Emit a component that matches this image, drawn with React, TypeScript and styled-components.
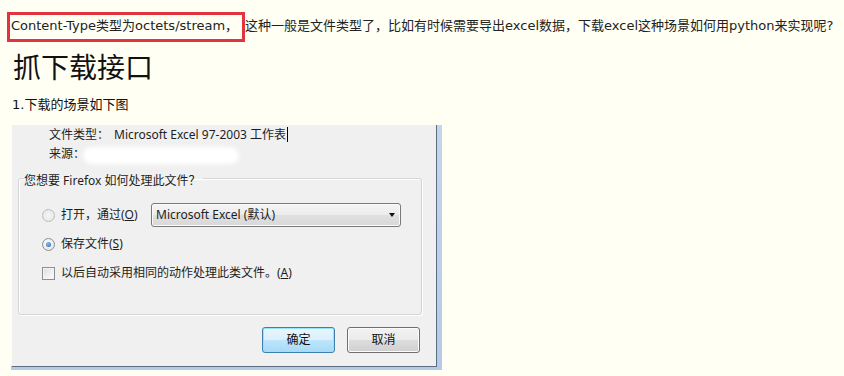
import React from "react";
import styled, { createGlobalStyle } from "styled-components";

const GlobalStyle = createGlobalStyle`
  html, body { margin: 0; padding: 0; background: #fffff4; }
  body { font-family: "DejaVu Sans", "Noto Sans CJK SC", sans-serif; color: #222; }
`;

const Page = styled.div`
  padding-top: 12px;
  min-height: 376px;
  box-sizing: border-box;
  background: #fffff4;
`;

const Intro = styled.p`
  margin: 0 0 0 7px;
  display: flex;
  align-items: baseline;
  font-size: 13px;
  line-height: 16px;
  white-space: nowrap;
  color: #222;
  text-spacing-trim: space-all;
`;

const Highlight = styled.span`
  border: 3px solid #e2343f;
  padding: 3px 4px 5px 1px;
`;

const Title = styled.h1`
  margin: 7px 0 0 13px;
  font: 400 28px/34px "Noto Sans CJK SC", sans-serif;
  color: #111;
`;

const Step = styled.p`
  margin: 13px 0 0 12px;
  font-size: 13px;
  line-height: 18px;
  color: #111;
`;

const Shot = styled.div`
  margin: 11px 0 0 11px;
  width: 431px;
  height: 245px;
  box-sizing: border-box;
  display: flex;
  padding: 0 5px 3px 0;
  background: linear-gradient(to bottom, #c4d6ec, #b4cbe6);
`;

const Client = styled.div`
  flex: 1;
  display: flex;
  flex-direction: column;
  background: #f0f0f0;
  border-left: 1px solid #fbfbfb;
  border-right: 1px solid #5d6c80;
  border-bottom: 1px solid #5d6c80;
  font: 12px/16px "Noto Sans", "Noto Sans CJK SC", sans-serif;
  color: #1e1e1e;
`;

const InfoRow = styled.div`
  height: 19px;
  display: flex;
  align-items: center;
  padding-left: 37px;
`;

const InfoLabel = styled.span`
  width: 65px;
  flex: none;
`;

const Caret = styled.span`
  display: inline-block;
  width: 0;
  height: 15px;
  border-left: 1px solid #000;
  margin-left: 1px;
`;

const Redacted = styled.span`
  display: inline-block;
  width: 150px;
  height: 11px;
  margin-left: -28px;
  margin-top: 3px;
  border-radius: 6px;
  background: #ffffff;
  box-shadow: 0 0 4px 3px #ffffff;
`;

const GroupBox = styled.fieldset`
  margin: 6px 14px 0 6px;
  padding: 15px 0 0 5px;
  height: 146px;
  box-sizing: border-box;
  border: 1px solid #d5d5d5;
  border-radius: 3px;
  box-shadow: inset 1px 1px 0 #ffffff, 1px 1px 0 #ffffff;
  display: flex;
  flex-direction: column;
`;

const Legend = styled.legend`
  padding: 5px 2px 0 0;
  margin-left: 0;
  line-height: 14px;
`;

const OptionRow = styled.div<{ $h: number; $gap: number }>`
  display: flex;
  align-items: center;
  height: ${(p) => p.$h}px;
  margin-top: ${(p) => p.$gap}px;
  padding-left: 18px;
`;

const Radio = styled.span<{ $checked?: boolean; $disabled?: boolean }>`
  width: 11px;
  height: 11px;
  flex: none;
  border-radius: 50%;
  border: 1px solid ${(p) => (p.$disabled ? "#bcbcbc" : "#8e8f8f")};
  background: ${(p) =>
    p.$disabled
      ? "radial-gradient(circle at 50% 50%, #f4f4f4, #e6e6e6)"
      : "radial-gradient(circle at 45% 40%, #ffffff, #dcdcdc)"};
  display: flex;
  align-items: center;
  justify-content: center;
  &::after {
    content: "";
    display: ${(p) => (p.$checked ? "block" : "none")};
    width: 5px;
    height: 5px;
    border-radius: 50%;
    background: radial-gradient(circle at 40% 35%, #8fc1ec, #1d5fa8);
  }
`;

const Check = styled.span`
  width: 11px;
  height: 11px;
  flex: none;
  border: 1px solid #8e8f8f;
  background: linear-gradient(135deg, #dcdcdc, #ffffff);
  box-shadow: inset 0 0 0 1px #f4f4f4;
`;

const OptionText = styled.span<{ $w?: number }>`
  margin-left: 6px;
  width: ${(p) => (p.$w ? `${p.$w}px` : "auto")};
  flex: none;
`;

const Key = styled.span`
  text-decoration: underline;
`;

const Select = styled.div`
  width: 250px;
  height: 24px;
  box-sizing: border-box;
  border: 1px solid #7a7a7a;
  border-radius: 3px;
  background: linear-gradient(to bottom, #f4f4f4 0%, #ececec 50%, #e0e0e0 51%, #d8d8d8 100%);
  box-shadow: inset 0 0 0 1px #fbfbfb;
  display: flex;
  align-items: center;
  justify-content: space-between;
  padding: 0 5px 0 4px;
`;

const Arrow = styled.span`
  width: 0;
  height: 0;
  border-left: 3.5px solid transparent;
  border-right: 3.5px solid transparent;
  border-top: 4px solid #111;
`;

const ButtonBar = styled.div`
  display: flex;
  justify-content: flex-end;
  gap: 12px;
  margin-top: 12px;
  padding-right: 16px;
`;

const Button = styled.div<{ $default?: boolean }>`
  width: 73px;
  height: 26px;
  box-sizing: border-box;
  border-radius: 3px;
  display: flex;
  align-items: center;
  justify-content: center;
  font-size: 12px;
  color: #111;
  border: 1px solid ${(p) => (p.$default ? "#3c7fb1" : "#707070")};
  background: ${(p) =>
    p.$default
      ? "linear-gradient(to bottom, #eaf6fd 0%, #d9f0fc 50%, #bee6fd 51%, #a7d9f5 100%)"
      : "linear-gradient(to bottom, #f2f2f2 0%, #ebebeb 50%, #dddddd 51%, #cfcfcf 100%)"};
  box-shadow: inset 0 0 0 1px ${(p) => (p.$default ? "#97e3f7" : "#fcfcfc")};
`;

export default function App() {
  return (
    <Page>
      <GlobalStyle />
      <Intro>
        <Highlight>Content-Type类型为octets/stream，</Highlight>
        <span>这种一般是文件类型了，比如有时候需要导出excel数据，下载excel这种场景如何用python来实现呢?</span>
      </Intro>
      <Title>抓下载接口</Title>
      <Step>1.下载的场景如下图</Step>
      <Shot>
        <Client>
          <InfoRow>
            <InfoLabel>文件类型：</InfoLabel>
            <span>Microsoft Excel 97-2003 工作表</span>
            <Caret />
          </InfoRow>
          <InfoRow>
            <InfoLabel>来源：</InfoLabel>
            <Redacted />
          </InfoRow>
          <GroupBox>
            <Legend>您想要 Firefox 如何处理此文件？</Legend>
            <OptionRow $h={24} $gap={0}>
              <Radio $disabled />
              <OptionText $w={90}>
                打开，通过(<Key>O</Key>)
              </OptionText>
              <Select>
                <span>Microsoft Excel (默认)</span>
                <Arrow />
              </Select>
            </OptionRow>
            <OptionRow $h={20} $gap={7}>
              <Radio $checked />
              <OptionText>
                保存文件(<Key>S</Key>)
              </OptionText>
            </OptionRow>
            <OptionRow $h={20} $gap={9}>
              <Check />
              <OptionText>
                以后自动采用相同的动作处理此类文件。(<Key>A</Key>)
              </OptionText>
            </OptionRow>
          </GroupBox>
          <ButtonBar>
            <Button $default>确定</Button>
            <Button>取消</Button>
          </ButtonBar>
        </Client>
      </Shot>
    </Page>
  );
}
